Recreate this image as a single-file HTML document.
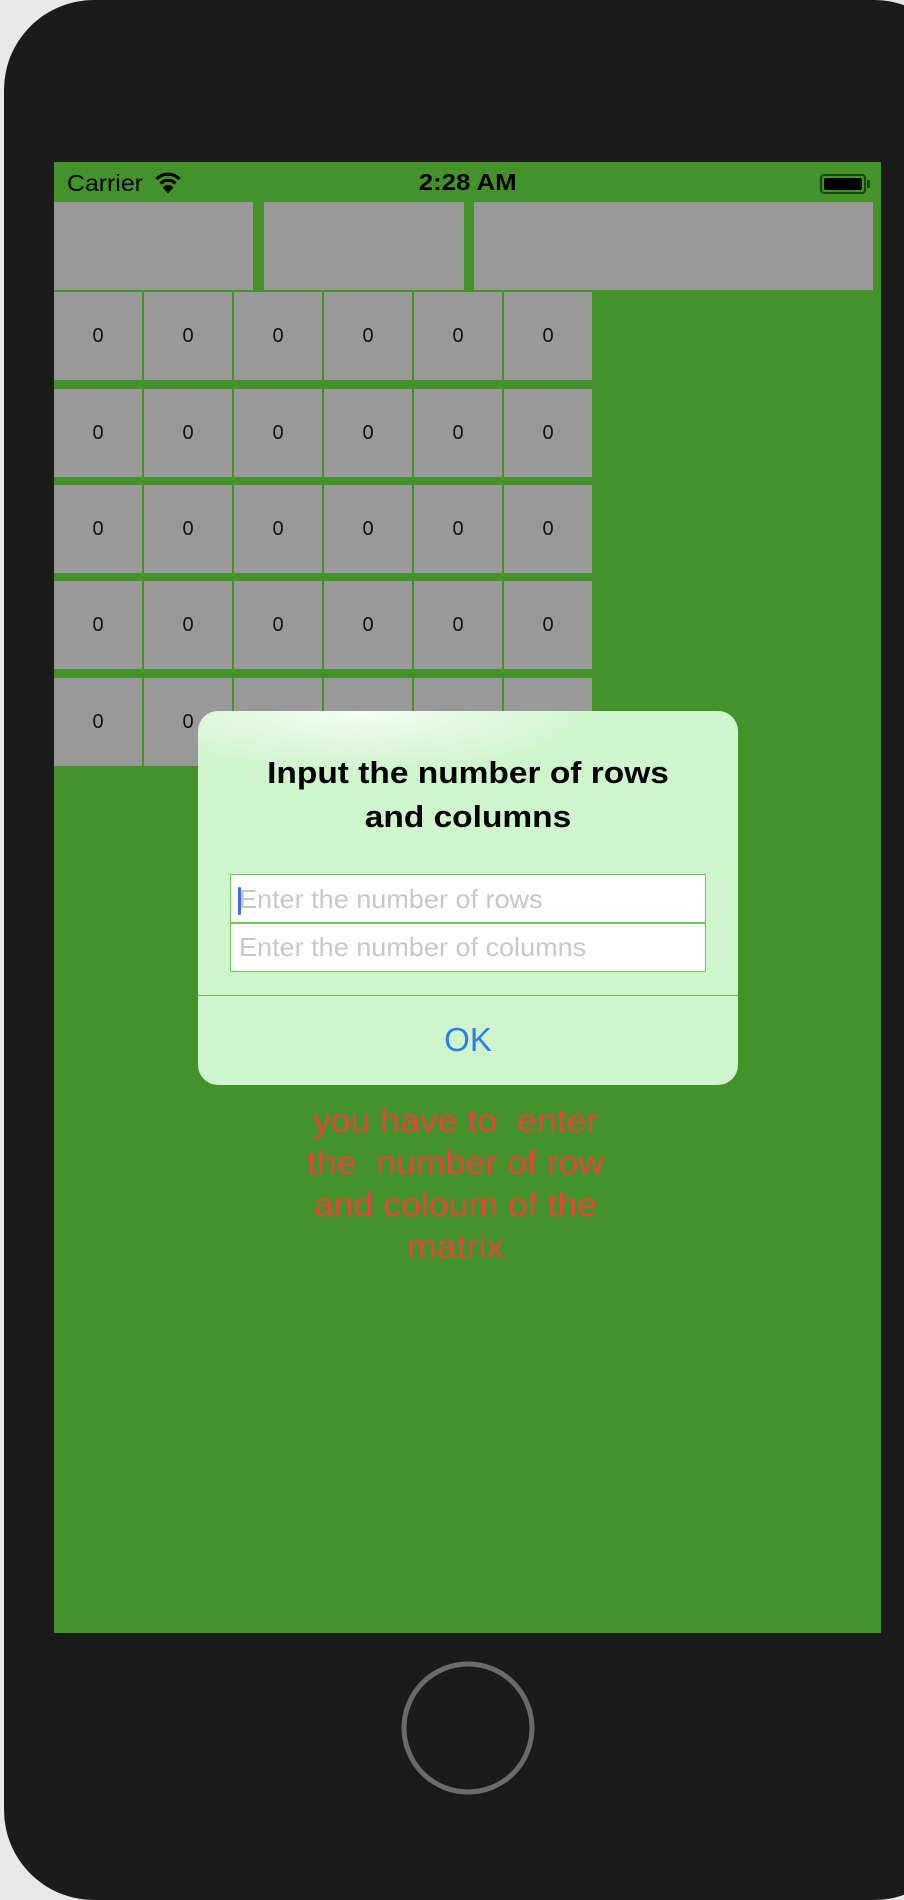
<!DOCTYPE html>
<html><head><meta charset="utf-8"><style>
*{margin:0;padding:0;box-sizing:border-box}
body{width:904px;height:1788px;background:#e8e8e8;position:relative;overflow:hidden;font-family:"Liberation Sans",sans-serif}
.phone{position:absolute;left:4px;top:0;width:960px;height:1900px;background:#1b1b1b;border-radius:90px}
.scr{position:absolute;left:54px;top:162px;width:827px;height:1471px;background:#43922a;overflow:hidden}
.abs{position:absolute}
.g{position:absolute;background:#999;}
.c{position:absolute;background:#999;width:88px;height:88px;display:flex;align-items:center;justify-content:center;font-size:20px;color:#111}
.sx{display:inline-block;transform-origin:center}
</style></head><body>
<div class="phone"></div>
<div class="scr">
  <div class="abs" style="left:13px;top:8px;font-size:23px;color:#000;transform:scaleX(1.08);transform-origin:left">Carrier</div>
  <svg class="abs" style="left:99px;top:10px" width="30" height="22" viewBox="0 0 26 22"><path d="M1.5 7 A16 16 0 0 1 24.5 7" stroke="#000" stroke-width="3.2" fill="none"/><path d="M5.5 11.5 A10.5 10.5 0 0 1 20.5 11.5" stroke="#000" stroke-width="3.2" fill="none"/><path d="M9 15.5 A6 6 0 0 1 17 15.5 L13 20Z" fill="#000" stroke="#000" stroke-width="2"/></svg>
  <div class="abs" style="left:0;width:827px;top:7px;text-align:center;font-size:23px;font-weight:bold;color:#000"><span class="sx" style="transform:scaleX(1.12)">2:28 AM</span></div>
  <div class="abs" style="left:766px;top:12px;width:46px;height:20px;border:2px solid #1a4a10;border-radius:4px;padding:2px"><div style="background:#000;width:100%;height:100%;border-radius:2px"></div></div>
  <div class="abs" style="left:813px;top:18px;width:3px;height:8px;background:#1a4a10"></div>
  <div class="g" style="left:0;top:40px;width:199px;height:88px"></div>
  <div class="g" style="left:210px;top:40px;width:200px;height:88px"></div>
  <div class="g" style="left:420px;top:40px;width:399px;height:88px"></div>
  <div id="grid"></div>
  <div class="abs" style="left:144px;top:549px;width:540px;height:374px;background:#cff5cc;border-radius:20px;overflow:hidden">
    <div class="abs" style="left:0;top:0;width:400px;height:60px;background:radial-gradient(ellipse at 40% 0%,rgba(255,255,255,.8),rgba(255,255,255,0) 70%)"></div>
    <div class="abs" style="left:0;width:540px;top:40px;text-align:center;font-size:31px;font-weight:bold;line-height:44px;color:#000"><span class="sx" style="transform:scaleX(1.08)">Input the number of rows<br>and columns</span></div>
    <div class="abs" style="left:32px;top:163px;width:476px;height:98px;background:#fff;border:1px solid #6cc85a"></div>
    <div class="abs" style="left:32px;top:211px;width:476px;height:2px;background:#6cc85a"></div>
    <div class="abs" style="left:40px;top:176px;width:3px;height:28px;background:#3a6cf0;border-radius:2px"></div>
    <div class="abs" style="left:41px;top:173px;font-size:26px;color:#c7c7cd;transform:scaleX(1.04);transform-origin:left">Enter the number of rows</div>
    <div class="abs" style="left:41px;top:221px;font-size:26px;color:#c7c7cd;transform:scaleX(1.04);transform-origin:left">Enter the number of columns</div>
    <div class="abs" style="left:0;top:284px;width:540px;height:1px;background:#6cc85a"></div>
    <div class="abs" style="left:0;width:540px;top:310px;text-align:center;font-size:33px;color:#2f7cf6">OK</div>
  </div>
  <div class="abs" style="left:202px;width:400px;top:938px;text-align:center;font-size:33px;line-height:42px;color:#e8433a"><span class="sx" style="transform:scaleX(1.08)">you have to&nbsp; enter<br>the&nbsp; number of row<br>and coloum of the<br>matrix</span></div>
</div>
<svg class="abs" style="left:400px;top:1660px" width="136" height="136"><circle cx="68" cy="68" r="64" stroke="#6b6b6b" stroke-width="5" fill="none"/></svg>
<script>
var g=document.getElementById('grid'),h='';
var rows=[130,227,323,419,516],cols=[0,90,180,270,360,450];
rows.forEach(function(r){cols.forEach(function(c){h+='<div class="c" style="left:'+c+'px;top:'+r+'px">0</div>';});});
g.innerHTML=h;
</script>
</body></html>
